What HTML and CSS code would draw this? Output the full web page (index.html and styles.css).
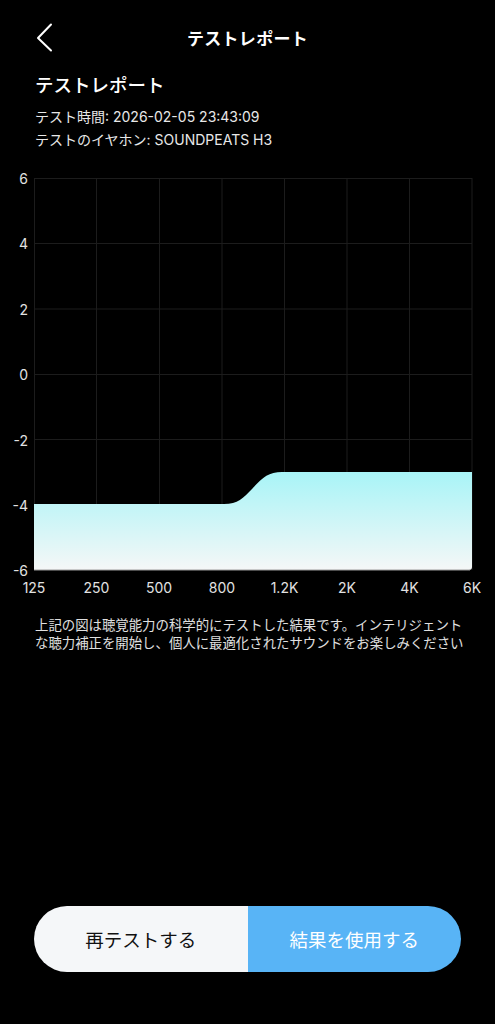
FILE: index.html
```html
<!DOCTYPE html>
<html lang="ja">
<head>
  <meta charset="UTF-8" />
  <meta name="viewport" content="width=device-width, initial-scale=1.0" />
  <title>テストレポート</title>
  <link rel="stylesheet" href="styles.css">
</head>
<body>
  <div class="page">
    <header class="topbar">
      <button class="back" aria-label="戻る">
        <svg width="20" height="32" viewBox="0 0 20 32">
          <path d="M16 3.5 L3 17 L16 29.5" fill="none" stroke="#fff" stroke-width="2" stroke-linecap="round" stroke-linejoin="round"/>
        </svg>
      </button>
      <h1 class="title">テストレポート</h1>
    </header>

    <section class="report">
      <h2 class="report-title">テストレポート</h2>
      <p class="meta">テスト時間: 2026-02-05 23:43:09</p>
      <p class="meta">テストのイヤホン: SOUNDPEATS H3</p>
    </section>

    <div class="chart">
      <svg width="495" height="440" viewBox="0 0 495 440">
        <defs>
          <linearGradient id="fill" x1="0" y1="0" x2="0" y2="1">
            <stop offset="0" stop-color="#a8f4f7"/>
            <stop offset="1" stop-color="#f5f7f7"/>
          </linearGradient>
        </defs>
        <g stroke="#1c1c1c" stroke-width="1">
          <line x1="34" y1="18.5" x2="472" y2="18.5"/>
          <line x1="34" y1="83.5" x2="472" y2="83.5"/>
          <line x1="34" y1="149" x2="472" y2="149"/>
          <line x1="34" y1="214.5" x2="472" y2="214.5"/>
          <line x1="34" y1="279.5" x2="472" y2="279.5"/>
          <line x1="34.5" y1="18" x2="34.5" y2="410"/>
          <line x1="96.5" y1="18" x2="96.5" y2="410"/>
          <line x1="159.5" y1="18" x2="159.5" y2="410"/>
          <line x1="222" y1="18" x2="222" y2="410"/>
          <line x1="284.5" y1="18" x2="284.5" y2="410"/>
          <line x1="347" y1="18" x2="347" y2="410"/>
          <line x1="409.5" y1="18" x2="409.5" y2="410"/>
          <line x1="472" y1="18" x2="472" y2="410"/>
        </g>
        <path d="M34 410 L34 344 L224 344 C238 344 243 338 252 329 C262 318 268 312 282 312 L472 312 L472 407 Q472 410 469 410 Z" fill="url(#fill)"/>
        <line x1="34" y1="410" x2="470" y2="410" stroke="#9a9a9a" stroke-width="1"/>
        <g class="axis-y" text-anchor="end">
          <text x="28" y="18">6</text>
          <text x="28" y="83">4</text>
          <text x="28" y="149">2</text>
          <text x="28" y="214">0</text>
          <text x="28" y="280">-2</text>
          <text x="28" y="345">-4</text>
          <text x="28" y="410">-6</text>
        </g>
        <g class="axis-x" text-anchor="middle">
          <text x="34" y="427">125</text>
          <text x="96.5" y="427">250</text>
          <text x="159" y="427">500</text>
          <text x="222" y="427">800</text>
          <text x="284.5" y="427">1.2K</text>
          <text x="347" y="427">2K</text>
          <text x="409.5" y="427">4K</text>
          <text x="472" y="427">6K</text>
        </g>
      </svg>
    </div>

    <p class="note">上記の図は聴覚能力の科学的にテストした結果です。インテリジェント<br>な聴力補正を開始し、個人に最適化されたサウンドをお楽しみください</p>

    <div class="actions">
      <button class="btn btn-retest">再テストする</button>
      <button class="btn btn-use">結果を使用する</button>
    </div>
  </div>
</body>
</html>
```

FILE: styles.css
```css
* {
  box-sizing: border-box;
}
body {
  margin: 0;
  background: #000;
  color: #fff;
  font-family: Inter, "Noto Sans CJK JP", sans-serif;
}
.page {
  display: flex;
  flex-direction: column;
  width: 495px;
  height: 1024px;
}
.topbar {
  position: relative;
  display: flex;
  align-items: center;
  justify-content: center;
  height: 62px;
  margin-top: 6px;
}
.back {
  position: absolute;
  left: 35px;
  top: 15px;
  padding: 0;
  border: 0;
  background: none;
  line-height: 0;
}
.title {
  margin: 0;
  font-size: 17px;
  font-weight: 700;
  letter-spacing: 0.3px;
}
.report {
  padding: 0 35px;
}
.report-title {
  margin: 2px 0 0;
  height: 30px;
  line-height: 30px;
  font-size: 18.5px;
  font-weight: 500;
}
.meta {
  margin: 0;
  font-size: 14px;
  line-height: 23px;
  color: #e8e8e8;
}
.report-title + .meta {
  margin-top: 5px;
}
.chart {
  margin-top: 9px;
  line-height: 0;
}
.chart text {
  font-family: Inter, sans-serif;
  font-size: 14px;
  fill: #e2e2e2;
  dominant-baseline: central;
}
.note {
  margin: 16px 0 0;
  padding: 0 20px 0 35px;
  font-size: 13.4px;
  line-height: 18px;
  color: #e0e0e0;
  white-space: nowrap;
}
.actions {
  display: flex;
  margin: auto 34px 52px;
  height: 66px;
  border-radius: 33px;
  overflow: hidden;
}
.btn {
  flex: 1;
  border: 0;
  font-family: "Noto Sans CJK JP", sans-serif;
  font-size: 18.5px;
}
.btn-retest {
  background: #f5f7f9;
  color: #111;
}
.btn-use {
  background: #58b4f6;
  color: #fff;
}
```
